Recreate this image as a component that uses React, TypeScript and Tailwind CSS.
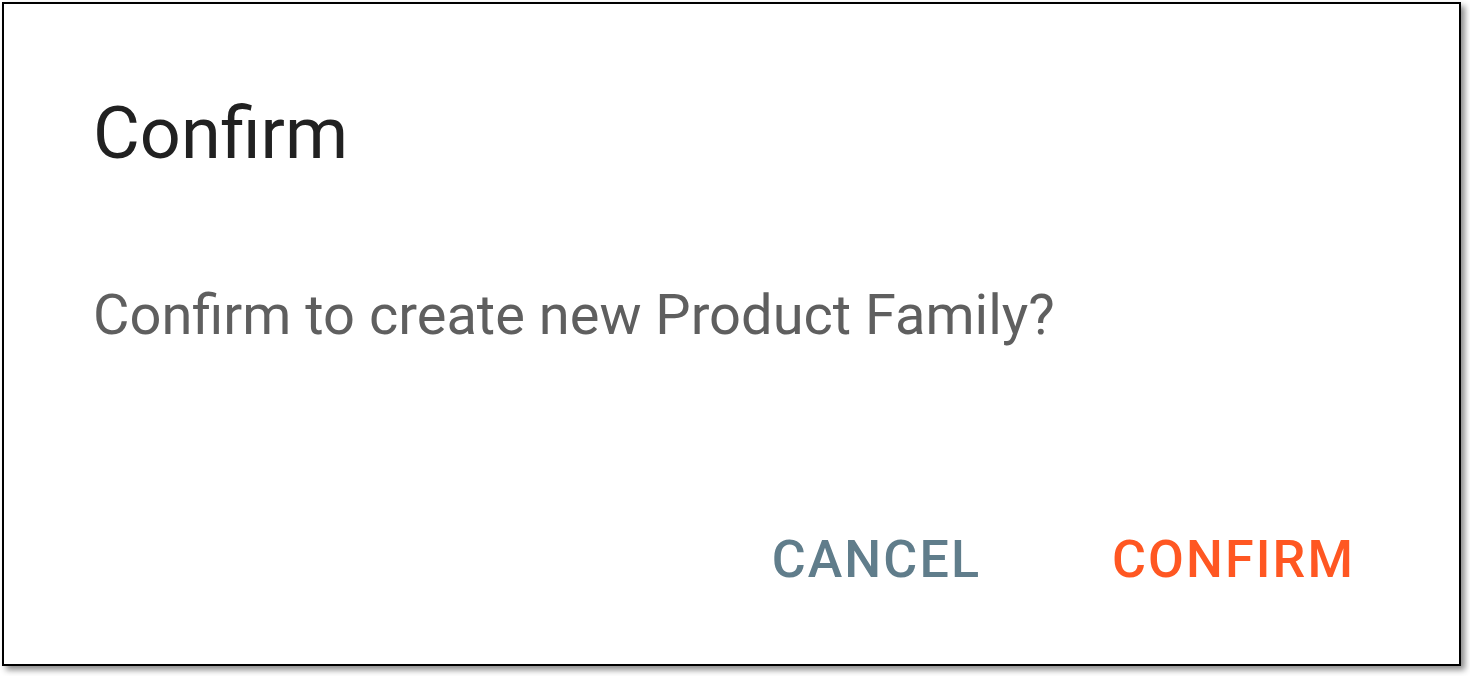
export default function App() {
  return (
    <div className="min-h-[676px] w-[1470px] bg-white pl-[2px] pt-[2px]" style={{ fontFamily: 'Roboto, "Liberation Sans", sans-serif' }}>
      <div className="flex h-[664px] w-[1459px] flex-col border-2 border-black bg-white shadow-[4px_4px_6px_rgba(0,0,0,0.45)]">
        <h2 className="pl-[89px] pt-[90px] text-[72px] leading-[80px] font-normal text-[#212121]">Confirm</h2>
        <p className="pl-[89px] pt-[101px] text-[56px] leading-[80px] text-[#5f5f5f]">
          Confirm to create new Product Family?
        </p>
        <div className="mt-auto flex justify-end gap-[131px] pr-[104px] pb-[74px]">
          <button className="text-[52px] leading-[60px] font-medium tracking-[2.1px] text-[#607d8b]">CANCEL</button>
          <button className="text-[52px] leading-[60px] font-medium tracking-[2.1px] text-[#ff5722]">CONFIRM</button>
        </div>
      </div>
    </div>
  );
}
